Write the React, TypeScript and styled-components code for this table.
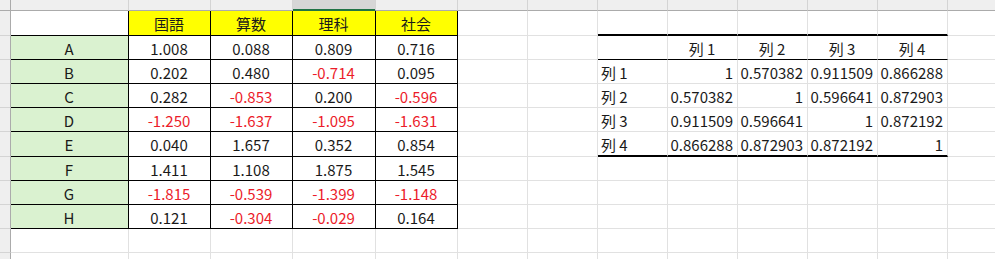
import React from "react";
import styled, { createGlobalStyle, css } from "styled-components";

const GlobalStyle = createGlobalStyle`
  html, body {
    margin: 0;
    padding: 0;
    background: #ffffff;
    overflow: hidden;
  }
  body {
    font-family: "Noto Sans CJK JP", "Noto Sans", sans-serif;
  }
`;

type Line = "grid" | "thin" | "thick";

type CellSpec = {
  text?: string;
  align?: "left" | "center" | "right";
  bg?: string;
  bottom?: Line;
  right?: Line;
};

const COL_WIDTHS = [118, 82, 82, 83, 82, 70, 70, 70, 70, 70, 70, 70, 70];
const ROW_HEIGHTS = [25, 24, 24, 24, 24, 25, 24, 24, 24, 24, 24, 24];
const SELECTED_COL = 3;

const YELLOW = "#ffff00";
const GREEN = "#daf2d0";

const subjects = ["国語", "算数", "理科", "社会"];
const scores: [string, string[]][] = [
  ["A", ["1.008", "0.088", "0.809", "0.716"]],
  ["B", ["0.202", "0.480", "-0.714", "0.095"]],
  ["C", ["0.282", "-0.853", "0.200", "-0.596"]],
  ["D", ["-1.250", "-1.637", "-1.095", "-1.631"]],
  ["E", ["0.040", "1.657", "0.352", "0.854"]],
  ["F", ["1.411", "1.108", "1.875", "1.545"]],
  ["G", ["-1.815", "-0.539", "-1.399", "-1.148"]],
  ["H", ["0.121", "-0.304", "-0.029", "0.164"]],
];

const corr = [
  ["1", "0.570382", "0.911509", "0.866288"],
  ["0.570382", "1", "0.596641", "0.872903"],
  ["0.911509", "0.596641", "1", "0.872192"],
  ["0.866288", "0.872903", "0.872192", "1"],
];

// build the sheet contents: rows x cols
const buildCells = (): CellSpec[][] => {
  const rows: CellSpec[][] = ROW_HEIGHTS.map(() => COL_WIDTHS.map(() => ({})));

  // left table (A1:E9)
  for (let r = 0; r < 9; r++) {
    for (let c = 0; c < 5; c++) {
      rows[r][c] = { bottom: "thin", right: "thin", align: "center" };
    }
  }
  subjects.forEach((s, i) => {
    rows[0][i + 1] = { ...rows[0][i + 1], text: s, bg: YELLOW };
  });
  scores.forEach(([label, vals], r) => {
    rows[r + 1][0] = { ...rows[r + 1][0], text: label, bg: GREEN };
    vals.forEach((v, i) => {
      rows[r + 1][i + 1] = { ...rows[r + 1][i + 1], text: v };
    });
  });

  // correlation table (H2:L6)
  for (let c = 7; c < 12; c++) {
    rows[0][c] = { bottom: "thick" };
    rows[1][c] = { bottom: "thin", align: "center", text: c === 7 ? "" : `列 ${c - 7}` };
  }
  corr.forEach((vals, r) => {
    const row = r + 2;
    rows[row][7] = { text: `列 ${r + 1}`, align: "left", bottom: r === 3 ? "thick" : "grid" };
    vals.forEach((v, i) => {
      rows[row][8 + i] = { text: v, align: "right", bottom: r === 3 ? "thick" : "grid" };
    });
  });

  return rows;
};

const lineColor = (l?: Line) => (l === "thin" || l === "thick" ? "#000000" : "#e1e1e1");

const Viewport = styled.div`
  height: 100vh;
  overflow: hidden;
`;

const Sheet = styled.div`
  display: grid;
  grid-template-columns: 11px ${COL_WIDTHS.map((w) => `${w}px`).join(" ")};
  grid-template-rows: 11px ${ROW_HEIGHTS.map((h) => `${h}px`).join(" ")};
  width: max-content;
`;

const Corner = styled.div`
  background: #efefef;
  border-right: 1px solid #ababab;
  border-bottom: 1px solid #ababab;
`;

const ColHeader = styled.div<{ $selected?: boolean }>`
  box-sizing: border-box;
  background: ${(p) => (p.$selected ? "#d6d6d6" : "#efefef")};
  border-right: 1px solid #d4d4d4;
  border-bottom: 1px solid ${(p) => (p.$selected ? "#217346" : "#ababab")};
  ${(p) =>
    p.$selected &&
    css`
      box-shadow: inset 0 -1px 0 #217346;
    `}
`;

const RowHeader = styled.div`
  position: relative;
  box-sizing: border-box;
  background: #efefef;
  border-right: 1px solid #ababab;
  border-bottom: 1px solid #d4d4d4;
`;

const ScrollDot = styled.span`
  position: absolute;
  left: -3px;
  top: 8px;
  width: 5px;
  height: 6px;
  border-radius: 50%;
  background: #3f8ad8;
`;

const Cell = styled.div<{
  $align?: string;
  $bg?: string;
  $bottom?: Line;
  $right?: Line;
  $red?: boolean;
}>`
  box-sizing: border-box;
  display: flex;
  align-items: center;
  justify-content: ${(p) =>
    p.$align === "left" ? "flex-start" : p.$align === "right" ? "flex-end" : "center"};
  padding: 1px 4px 0 3px;
  overflow: hidden;
  white-space: nowrap;
  background: ${(p) => p.$bg || "#ffffff"};
  border-right: 1px solid ${(p) => lineColor(p.$right)};
  border-bottom: ${(p) => (p.$bottom === "thick" ? 2 : 1)}px solid ${(p) => lineColor(p.$bottom)};
  color: ${(p) => (p.$red ? "#ec1c2a" : "#1a1a1a")};
  font-size: 15px;
  line-height: 1;
`;

const App: React.FC = () => {
  const cells = buildCells();

  return (
    <>
      <GlobalStyle />
      <Viewport>
        <Sheet>
          <Corner />
          {COL_WIDTHS.map((_, c) => (
            <ColHeader key={`h${c}`} $selected={c === SELECTED_COL} />
          ))}
          {cells.map((row, r) => (
            <React.Fragment key={r}>
              <RowHeader>{r === 10 && <ScrollDot />}</RowHeader>
              {row.map((cell, c) => (
                <Cell
                  key={c}
                  $align={cell.align}
                  $bg={cell.bg}
                  $bottom={cell.bottom}
                  $right={cell.right}
                  $red={!!cell.text && cell.text.startsWith("-")}
                >
                  {cell.text}
                </Cell>
              ))}
            </React.Fragment>
          ))}
        </Sheet>
      </Viewport>
    </>
  );
};

export default App;
